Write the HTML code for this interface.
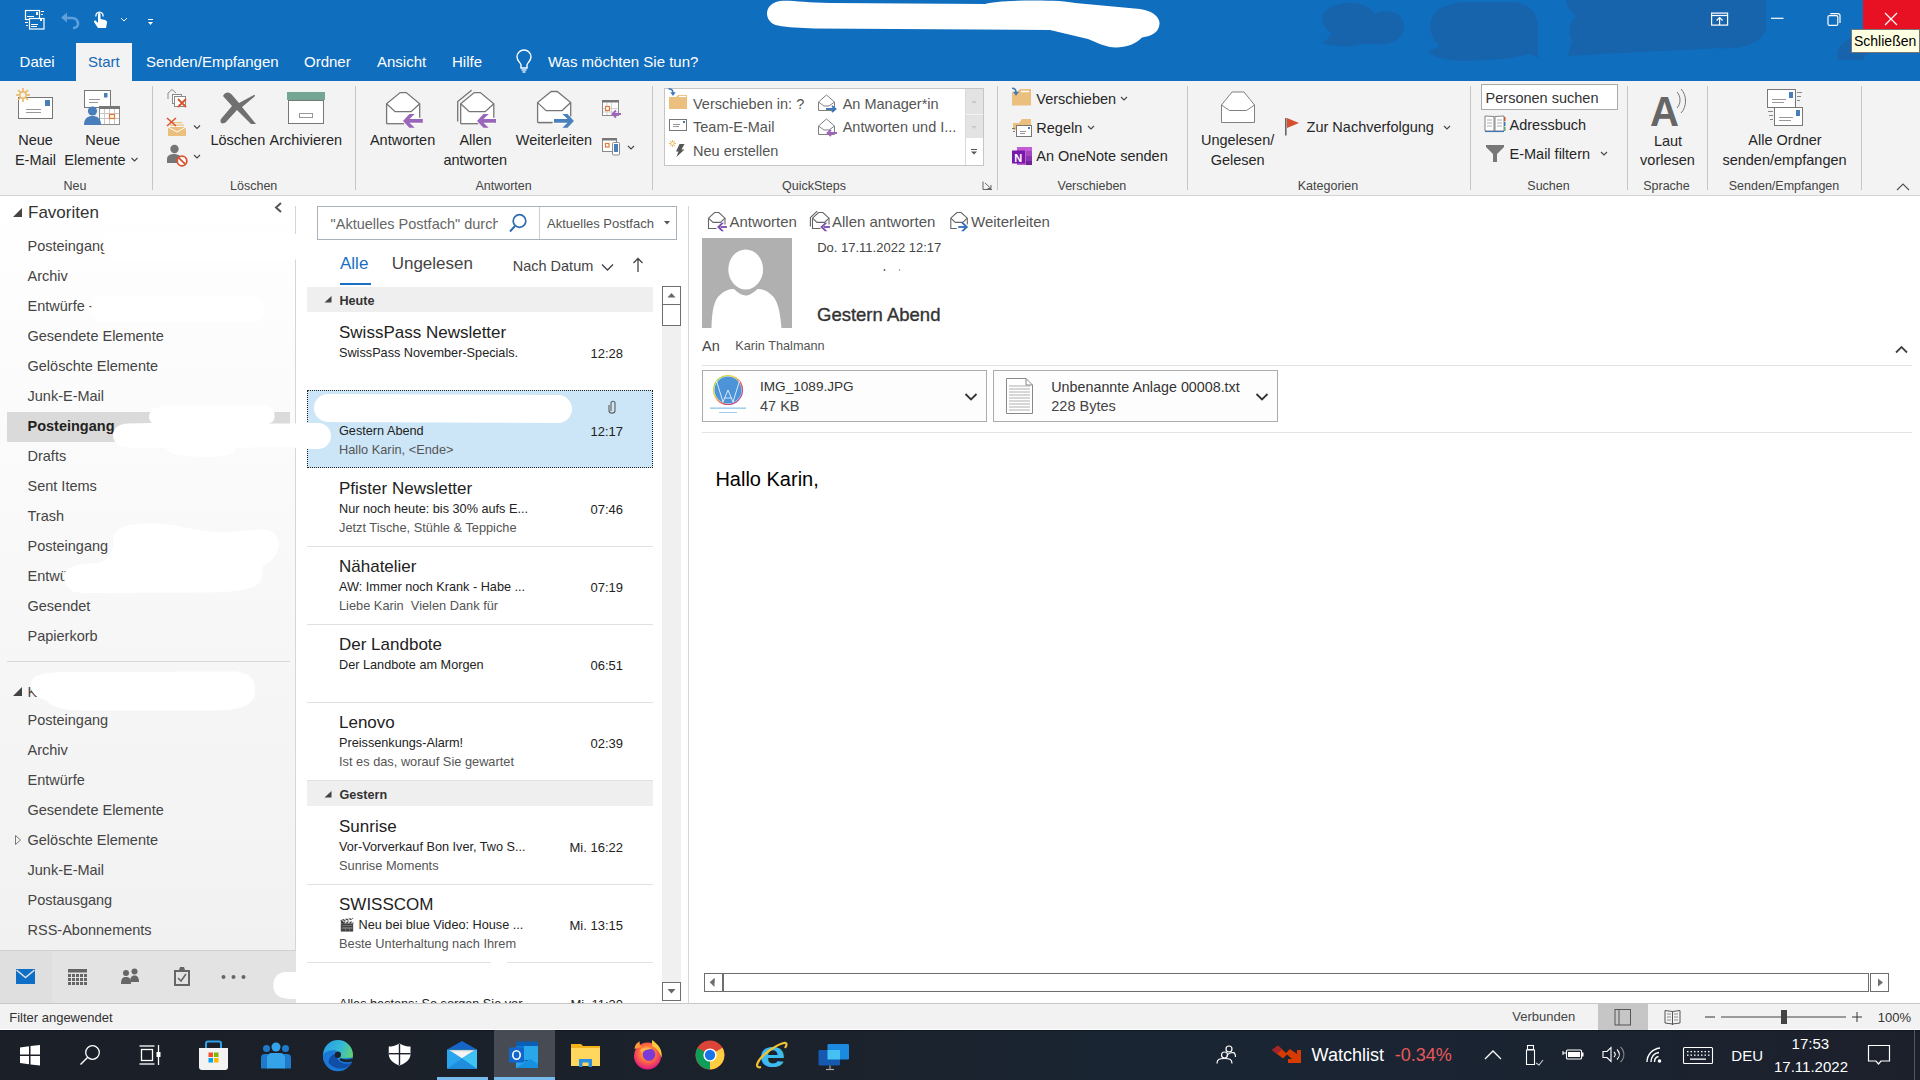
<!DOCTYPE html>
<html><head><meta charset="utf-8">
<style>
*{margin:0;padding:0;box-sizing:border-box}
html,body{width:1920px;height:1080px;overflow:hidden;background:#fff}
body{font-family:"Liberation Sans",sans-serif;position:relative}
.a{position:absolute}
.t{position:absolute;white-space:nowrap;line-height:1}
svg{position:absolute;overflow:visible}
</style></head><body>
<!-- 00_bg.py -->
<div class="a" style="left:0px;top:0px;width:1920px;height:81px;background:#106EBE;"></div>
<div class="a" style="left:0px;top:81px;width:1920px;height:114px;background:#F3F3F3;"></div>
<div class="a" style="left:0px;top:195px;width:1920px;height:1px;background:#D4D4D4;"></div>
<div class="a" style="left:0px;top:196px;width:295px;height:754px;background:linear-gradient(#FFFFFF,#F1F1F1);"></div>
<div class="a" style="left:295px;top:206px;width:1px;height:744px;background:#D6D6D6;"></div>
<div class="a" style="left:0px;top:950px;width:296px;height:53px;background:#E3E3E3;border-top:1px solid #D0D0D0"></div>
<div class="a" style="left:0px;top:951px;width:52px;height:52px;background:#DFDFDF;"></div>
<div class="a" style="left:688px;top:206px;width:1px;height:797px;background:#D6D6D6;"></div>
<div class="a" style="left:0px;top:1003px;width:1920px;height:27px;background:#F2F2F2;border-top:1px solid #C6C6C6"></div>
<div class="a" style="left:0px;top:1029px;width:1920px;height:1px;background:#FFFFFF;"></div>
<div class="a" style="left:0px;top:1030px;width:1920px;height:50px;background:linear-gradient(to right,#1B1F27 0%,#1B222C 45%,#1A2533 58%,#1A2432 75%,#1C202B 100%);"></div>
<div class="a" style="left:0px;top:1030px;width:1920px;height:1px;background:#0F1823;"></div>
<!-- 10_title.py -->
<!-- clouds -->
<svg style="left:0;top:0" width="1920" height="81">
 <g fill="#1763AC">
  <path d="M1322 44 L1332 34 C1318 24 1318 8 1340 4 C1356 1 1370 6 1374 14 C1386 8 1402 12 1404 24 C1406 38 1392 46 1376 44 L1360 44 C1350 48 1335 46 1322 44 Z"/>
  <path d="M1428 52 L1440 46 C1432 40 1428 28 1432 18 C1436 8 1450 2 1470 2 L1510 2 C1530 2 1538 14 1538 28 L1538 58 L1530 54 C1510 60 1470 62 1450 60 C1440 58 1432 56 1428 52 Z"/>
  <path d="M1566 0 L1766 0 L1766 30 C1760 44 1740 50 1720 48 L1600 54 L1568 56 L1572 40 C1566 30 1572 20 1576 16 C1568 10 1566 4 1566 0 Z"/>
  <path d="M1838 60 C1834 48 1846 36 1862 36 L1880 40 L1862 60 Z"/>
 </g>
 <!-- censor scribble -->
 <path d="M780 1 C792 0 805 3 830 3 L985 4 C995 0 1060 -1 1075 3 L1140 9 C1154 11 1160 18 1159.5 24 C1159 32 1152 36 1142 37.5 C1136 44 1126 47.5 1116 47.5 C1106 47.5 1098 43 1088 39 L1050 30 L815 28.5 C800 28 788 27.5 778 25.5 C764 23 762 4 780 1 Z" fill="#fff"/>
</svg>
<!-- QAT icons -->
<svg style="left:0;top:0" width="170" height="42">
 <g fill="none" stroke="#fff" stroke-width="1.2">
  <rect x="25.5" y="10.5" width="14" height="9"/>
  <rect x="29.5" y="18.5" width="14.5" height="10.5" fill="#106EBE"/>
 </g>
 <g fill="#fff">
  <rect x="36" y="12" width="2" height="3"/><rect x="40" y="18" width="2" height="3"/>
  <rect x="27" y="16" width="7" height="1"/><rect x="31" y="24" width="7" height="1"/><rect x="31" y="26" width="6" height="1"/>
  <rect x="41" y="11" width="3" height="1"/><rect x="41" y="14" width="2" height="1"/>
  <rect x="25" y="22" width="3" height="1"/><rect x="26" y="25" width="2" height="1"/>
 </g>
 <path d="M66 18 L72 18 C77 18 78 22 78 24 C78 26 76 28 73 28" stroke="#5EA0DA" stroke-width="2.6" fill="none"/>
 <path d="M61 17.5 L67 12.5 L67 22.5 Z" fill="#5EA0DA"/>
 <path d="M98 28 L94 22 C93.5 21 95 20 96 21 L98 23 L98 14 C98 12.5 100.5 12.5 100.5 14 L100.5 19 L105 20 C106.5 20.5 107 21 107 22.5 L106 28 Z" fill="#fff"/>
 <path d="M96 16.5 A3.6 3.6 0 1 1 103 16.5" stroke="#fff" stroke-width="1.3" fill="none"/>
 <path d="M121 18 L124 21 L127 18" stroke="#fff" stroke-width="1" fill="none"/>
 <rect x="148" y="19" width="5" height="1" fill="#fff"/>
 <path d="M148 22 L153 22 L150.5 25 Z" fill="#fff"/>
</svg>
<!-- window controls -->
<div class="a" style="left:1863px;top:0;width:57px;height:30px;background:#E81123"></div>
<svg style="left:1700px;top:0" width="220" height="30">
 <g stroke="#fff" stroke-width="1.2" fill="none">
  <rect x="11.6" y="13.1" width="16" height="12"/>
  <line x1="11.6" y1="15.5" x2="27.6" y2="15.5"/>
  <line x1="19.6" y1="17.5" x2="19.6" y2="25"/>
  <path d="M16.6 20.5 L19.6 17.5 L22.6 20.5"/>
  <line x1="71" y1="18.3" x2="83.5" y2="18.3"/>
  <rect x="128" y="15.6" width="9.8" height="9.8" rx="1.5"/>
  <path d="M130.3 13.6 L137.8 13.6 Q140 13.6 140 15.8 L140 23"/>
  <path d="M185 13 L197 25 M197 13 L185 25"/>
 </g>
</svg>
<div class="a" style="left:1851px;top:29px;width:69px;height:24px;background:#FFFFE1;border:1px solid #767676"></div>
<div class="t" style="left:1854px;top:34px;font-size:14px;color:#000">Schließen</div>
<!-- TABS -->
<div class="a" style="left:76px;top:43px;width:56px;height:38px;background:#F3F3F3"></div>
<div class="t" style="left:19.6px;top:54px;font-size:15px;color:#fff">Datei</div>
<div class="t" style="left:88px;top:54px;font-size:15px;color:#1568B8">Start</div>
<div class="t" style="left:146px;top:54px;font-size:15px;color:#fff">Senden/Empfangen</div>
<div class="t" style="left:304px;top:54px;font-size:15px;color:#fff">Ordner</div>
<div class="t" style="left:377px;top:54px;font-size:15px;color:#fff">Ansicht</div>
<div class="t" style="left:452px;top:54px;font-size:15px;color:#fff">Hilfe</div>
<svg style="left:510px;top:48px" width="30" height="28">
 <path d="M11 20 L11 17 C11 15 7 13 7 9 A7 7 0 0 1 21 9 C21 13 17 15 17 17 L17 20 Z" stroke="#fff" stroke-width="1.4" fill="none"/>
 <line x1="11.5" y1="22" x2="16.5" y2="22" stroke="#fff" stroke-width="1.3"/>
 <line x1="12.5" y1="24" x2="15.5" y2="24" stroke="#fff" stroke-width="1.3"/>
</svg>
<div class="t" style="left:548px;top:54px;font-size:15px;color:#fff">Was möchten Sie tun?</div>
<!-- 20_ribbon.py -->
<div class="a" style="left:152px;top:86px;width:1px;height:104px;background:#C6C6C6;"></div>
<div class="a" style="left:355px;top:86px;width:1px;height:104px;background:#C6C6C6;"></div>
<div class="a" style="left:652px;top:86px;width:1px;height:104px;background:#C6C6C6;"></div>
<div class="a" style="left:997px;top:86px;width:1px;height:104px;background:#C6C6C6;"></div>
<div class="a" style="left:1187px;top:86px;width:1px;height:104px;background:#C6C6C6;"></div>
<div class="a" style="left:1470px;top:86px;width:1px;height:104px;background:#C6C6C6;"></div>
<div class="a" style="left:1627px;top:86px;width:1px;height:104px;background:#C6C6C6;"></div>
<div class="a" style="left:1707px;top:86px;width:1px;height:104px;background:#C6C6C6;"></div>
<div class="a" style="left:1861px;top:86px;width:1px;height:104px;background:#C6C6C6;"></div>
<div class="t" style="left:-264.5px;width:600px;text-align:center;top:133.43px;font-size:14.5px;color:#262626;font-weight:normal;">Neue</div>
<div class="t" style="left:-264.5px;width:600px;text-align:center;top:153.33px;font-size:14.5px;color:#262626;font-weight:normal;">E-Mail</div>
<div class="t" style="left:-197.3px;width:600px;text-align:center;top:133.43px;font-size:14.5px;color:#262626;font-weight:normal;">Neue</div>
<div class="t" style="left:-205.0px;width:600px;text-align:center;top:153.33px;font-size:14.5px;color:#262626;font-weight:normal;">Elemente</div>
<div class="t" style="left:-225.0px;width:600px;text-align:center;top:179.82px;font-size:12.5px;color:#444;font-weight:normal;">Neu</div>
<div class="t" style="left:-62.2px;width:600px;text-align:center;top:133.43px;font-size:14.5px;color:#262626;font-weight:normal;">Löschen</div>
<div class="t" style="left:5.8px;width:600px;text-align:center;top:133.43px;font-size:14.5px;color:#262626;font-weight:normal;">Archivieren</div>
<div class="t" style="left:-46.3px;width:600px;text-align:center;top:179.82px;font-size:12.5px;color:#444;font-weight:normal;">Löschen</div>
<div class="t" style="left:102.6px;width:600px;text-align:center;top:133.43px;font-size:14.5px;color:#262626;font-weight:normal;">Antworten</div>
<div class="t" style="left:175.5px;width:600px;text-align:center;top:133.43px;font-size:14.5px;color:#262626;font-weight:normal;">Allen</div>
<div class="t" style="left:175.3px;width:600px;text-align:center;top:153.33px;font-size:14.5px;color:#262626;font-weight:normal;">antworten</div>
<div class="t" style="left:253.9px;width:600px;text-align:center;top:133.43px;font-size:14.5px;color:#262626;font-weight:normal;">Weiterleiten</div>
<div class="t" style="left:203.6px;width:600px;text-align:center;top:179.82px;font-size:12.5px;color:#444;font-weight:normal;">Antworten</div>
<div class="a" style="left:664px;top:88px;width:320px;height:78px;background:#FFFFFF;border:1px solid #C6C6C6"></div>
<div class="a" style="left:965px;top:89px;width:18px;height:25px;background:#E3E3E3;"></div>
<div class="a" style="left:965px;top:114px;width:18px;height:24px;background:#E3E3E3;border-top:1px solid #F3F3F3"></div>
<div class="a" style="left:965px;top:89px;width:1px;height:76px;background:#D9D9D9;"></div>
<div class="t" style="left:693.0px;top:96.73px;font-size:14.5px;color:#555;font-weight:normal;">Verschieben in: ?</div>
<div class="t" style="left:693.0px;top:120.43px;font-size:14.5px;color:#555;font-weight:normal;">Team-E-Mail</div>
<div class="t" style="left:693.0px;top:144.43px;font-size:14.5px;color:#555;font-weight:normal;">Neu erstellen</div>
<div class="t" style="left:842.7px;top:96.73px;font-size:14.5px;color:#555;font-weight:normal;">An Manager*in</div>
<div class="t" style="left:842.7px;top:120.43px;font-size:14.5px;color:#555;font-weight:normal;">Antworten und I...</div>
<div class="t" style="left:514.0px;width:600px;text-align:center;top:179.82px;font-size:12.5px;color:#444;font-weight:normal;">QuickSteps</div>
<div class="t" style="left:1036.3px;top:91.93px;font-size:14.5px;color:#262626;font-weight:normal;">Verschieben</div>
<div class="t" style="left:1036.3px;top:120.83px;font-size:14.5px;color:#262626;font-weight:normal;">Regeln</div>
<div class="t" style="left:1036.3px;top:149.43px;font-size:14.5px;color:#262626;font-weight:normal;">An OneNote senden</div>
<div class="t" style="left:791.9px;width:600px;text-align:center;top:179.82px;font-size:12.5px;color:#444;font-weight:normal;">Verschieben</div>
<div class="t" style="left:937.6px;width:600px;text-align:center;top:133.43px;font-size:14.5px;color:#262626;font-weight:normal;">Ungelesen/</div>
<div class="t" style="left:937.7px;width:600px;text-align:center;top:153.13px;font-size:14.5px;color:#262626;font-weight:normal;">Gelesen</div>
<div class="t" style="left:1306.6px;top:120.33px;font-size:14.5px;color:#262626;font-weight:normal;">Zur Nachverfolgung</div>
<div class="t" style="left:1028.0px;width:600px;text-align:center;top:179.82px;font-size:12.5px;color:#444;font-weight:normal;">Kategorien</div>
<div class="a" style="left:1481px;top:84px;width:137px;height:26px;background:#FFFFFF;border:1px solid #ABABAB"></div>
<div class="t" style="left:1485.6px;top:90.53px;font-size:14.5px;color:#333;font-weight:normal;">Personen suchen</div>
<div class="t" style="left:1509.5px;top:117.63px;font-size:14.5px;color:#262626;font-weight:normal;">Adressbuch</div>
<div class="t" style="left:1509.5px;top:146.53px;font-size:14.5px;color:#262626;font-weight:normal;">E-Mail filtern</div>
<div class="t" style="left:1248.5px;width:600px;text-align:center;top:179.82px;font-size:12.5px;color:#444;font-weight:normal;">Suchen</div>
<div class="t" style="left:1368.0px;width:600px;text-align:center;top:133.53px;font-size:14.5px;color:#262626;font-weight:normal;">Laut</div>
<div class="t" style="left:1367.5px;width:600px;text-align:center;top:153.03px;font-size:14.5px;color:#262626;font-weight:normal;">vorlesen</div>
<div class="t" style="left:1366.5px;width:600px;text-align:center;top:179.82px;font-size:12.5px;color:#444;font-weight:normal;">Sprache</div>
<div class="t" style="left:1485.0px;width:600px;text-align:center;top:133.33px;font-size:14.5px;color:#262626;font-weight:normal;">Alle Ordner</div>
<div class="t" style="left:1484.5px;width:600px;text-align:center;top:153.33px;font-size:14.5px;color:#262626;font-weight:normal;">senden/empfangen</div>
<div class="t" style="left:1484.0px;width:600px;text-align:center;top:179.82px;font-size:12.5px;color:#444;font-weight:normal;">Senden/Empfangen</div>
<svg style="left:0;top:0" width="1920" height="200">
<defs>
 <g id="chev"><path d="M-3 -1.5 L0 1.5 L3 -1.5" stroke="#444" stroke-width="1.1" fill="none"/></g>
</defs>
<!-- New email -->
<rect x="18.5" y="97.5" width="34" height="21" fill="#fff" stroke="#767676"/>
<rect x="45" y="100" width="5" height="6" fill="#4A7EBB"/>
<rect x="26" y="109" width="15" height="1" fill="#999"/><rect x="26" y="112" width="15" height="1" fill="#999"/>
<g stroke="#EAB864" stroke-width="1.6">
 <line x1="23" y1="88" x2="23" y2="102"/><line x1="16" y1="95" x2="30" y2="95"/>
 <line x1="18" y1="90" x2="28" y2="100"/><line x1="28" y1="90" x2="18" y2="100"/>
</g>
<circle cx="23" cy="95" r="3.2" fill="#F3F3F3" stroke="#EAB864" stroke-width="1.4"/>
<!-- New items -->
<rect x="84.5" y="90.5" width="26" height="17" fill="#fff" stroke="#767676"/>
<rect x="104" y="93" width="3.5" height="4.5" fill="#4A7EBB"/>
<rect x="89" y="99" width="11" height="1" fill="#999"/><rect x="89" y="102" width="9" height="1" fill="#999"/>
<rect x="99.5" y="106.5" width="20" height="18" fill="#fff" stroke="#8A8A8A"/>
<rect x="99" y="106" width="21" height="3" fill="#777"/>
<g stroke="#C8C8C8" stroke-width="1"><line x1="104.5" y1="109" x2="104.5" y2="124"/><line x1="109.5" y1="109" x2="109.5" y2="124"/><line x1="114.5" y1="109" x2="114.5" y2="124"/><line x1="100" y1="113.5" x2="119" y2="113.5"/><line x1="100" y1="118.5" x2="119" y2="118.5"/></g>
<rect x="109.5" y="114.5" width="5" height="4" fill="none" stroke="#E07B39" stroke-width="1.3"/>
<circle cx="92.5" cy="111" r="4.6" fill="#4A7EBB"/>
<path d="M84 125 C84 118 88 116 92.5 116 C97 116 101 118 101 125 Z" fill="#4A7EBB"/>
<use href="#chev" x="134.5" y="159.5"/>
<!-- Ignore -->
<path d="M168 99 L168 93 L172 89.5 L176 93" stroke="#8A8A8A" fill="none"/>
<rect x="172.5" y="94.5" width="9" height="9" fill="#fff" stroke="#8A8A8A"/>
<rect x="174.5" y="96.5" width="11" height="10" fill="#fff" stroke="#8A8A8A"/>
<path d="M178 99 L186 107 M186 99 L178 107" stroke="#D9532F" stroke-width="1.8"/>
<!-- Clean up -->
<rect x="168" y="127" width="18" height="9" fill="#EBC07E"/>
<path d="M168 127 L177 132 L186 127" stroke="#fff" stroke-width="1" fill="none"/>
<rect x="170" y="122" width="12" height="1.2" fill="#EBC07E"/><rect x="170" y="124.5" width="14" height="1.2" fill="#EBC07E"/>
<path d="M167 118 L176 126 M176 118 L167 126" stroke="#D9532F" stroke-width="1.5"/>
<use href="#chev" x="197" y="127"/>
<!-- Junk -->
<circle cx="174.5" cy="149" r="4.2" fill="#767676"/>
<path d="M167 163 L167 159 C167 155 171 154 174.5 154 C177 154 179 155 180 156 L178 163 Z" fill="#767676"/>
<circle cx="182" cy="161" r="4.8" fill="#fff" stroke="#D9532F" stroke-width="1.8"/>
<line x1="178.8" y1="157.8" x2="185.2" y2="164.2" stroke="#D9532F" stroke-width="1.8"/>
<use href="#chev" x="197" y="156.5"/>
<!-- Big X -->
<path d="M223 96 C226 91 230 92 233 96 L239 103 L252 96 C255 94 256 95 254 97 L242 107 L256 124 L251 124 L237 110 L226 122 C223 125 219 123 221 119 L232 106 Z" fill="#707070"/>
<!-- Archive -->
<rect x="287" y="92" width="38" height="8" fill="#75A693"/>
<rect x="288.5" y="100.5" width="35" height="23" fill="#fff" stroke="#767676"/>
<rect x="299.5" y="113.5" width="13" height="4" fill="none" stroke="#999"/>
<!-- Reply big -->
<defs>
<g id="benv">
 <path d="M0 11.1 L13.6 0 L19.6 0 L33.1 11.1 L33.1 31.1 L0 31.1 Z" fill="#fff"/>
 <g fill="none" stroke="#767676" stroke-width="1.3">
  <path d="M0 31.1 L0 11.1 L13.6 0 L19.6 0 L33.1 11.1 L33.1 25.1"/>
  <path d="M0 11.1 L8.5 19.1 L24.5 19.1 L33.1 11.1"/>
  <path d="M0 31.1 L17.5 31.1"/>
 </g>
</g>
</defs>
<use href="#benv" x="386.6" y="92.6"/>
<path d="M403 121 L409.4 114.1 L414.7 114.1 L409.5 119 L422.8 119 L422.8 122.8 L409.5 122.8 L414.7 127.8 L409.4 127.8 Z" fill="#9A66BA"/>
<path d="M457.7 121.6 L457.7 101.5 L471.6 90.3" fill="none" stroke="#767676" stroke-width="1.3"/>
<use href="#benv" x="460.7" y="92.6"/>
<path d="M477 121 L483.4 114.1 L488.7 114.1 L483.5 119 L496 119 L496 122.8 L483.5 122.8 L488.7 127.8 L483.4 127.8 Z" fill="#9A66BA"/>
<use href="#benv" x="537.6" y="91.5"/>
<rect x="552" y="116" width="12" height="8" fill="#fff"/>
<path d="M538.2 122.5 L552.8 122.5" stroke="#767676" stroke-width="1.3"/>
<path d="M573.9 121 L567.5 114 L562.4 114 L567.6 119 L554 119 L554 122.8 L567.6 122.8 L562.4 127.8 L567.5 127.8 Z" fill="#4A80BC"/>
<!-- meeting reply small -->
<rect x="602.5" y="100.5" width="16" height="15" fill="#fff" stroke="#8A8A8A"/>
<rect x="602" y="100" width="17" height="2.5" fill="#777"/>
<g stroke="#C8C8C8" stroke-width="0.8"><line x1="607" y1="103" x2="607" y2="115"/><line x1="611.5" y1="103" x2="611.5" y2="115"/><line x1="603" y1="108.5" x2="618" y2="108.5"/><line x1="603" y1="112" x2="618" y2="112"/></g>
<rect x="605.5" y="106.5" width="4" height="4" fill="#fff" stroke="#E07B39" stroke-width="1.2"/>
<path d="M621 114 L613 114 M616 110.5 L612.5 114 L616 117.5" stroke="#A064BE" stroke-width="1.8" fill="none"/>
<rect x="602.5" y="138.5" width="14" height="13" fill="#fff" stroke="#8A8A8A"/>
<rect x="602" y="138" width="15" height="2.5" fill="#777"/>
<rect x="605.5" y="143.5" width="3.5" height="3.5" fill="none" stroke="#E07B39" stroke-width="1.2"/>
<rect x="612.5" y="142.5" width="7" height="12.5" rx="1" fill="#fff" stroke="#8A8A8A"/>
<rect x="614" y="144" width="4" height="8" fill="#4A7EBB"/>
<use href="#chev" x="631" y="147.5"/>
<!-- Quicksteps icons -->
<path d="M669 97 L676 97 L678 95 L687 95 L687 109 L669 109 Z" fill="#EBC07E"/>
<path d="M679 96.5 L686 96.5" stroke="#fff" stroke-width="1.2"/>
<path d="M668.5 88.8 C671.5 88.8 673 90 673 93" stroke="#3F77B8" stroke-width="1.4" fill="none"/>
<path d="M670.3 92.3 L675.7 92.3 L673 96 Z" fill="#3F77B8"/>
<rect x="669.5" y="119.5" width="17" height="11" fill="#fff" stroke="#777"/>
<rect x="683" y="121" width="2" height="2" fill="#3F77B8"/>
<rect x="673" y="124" width="7" height="1" fill="#999"/><rect x="673" y="126" width="6" height="1" fill="#999"/>
<g stroke="#EBB864" stroke-width="1"><line x1="672.5" y1="140" x2="672.5" y2="147"/><line x1="669" y1="143.5" x2="676" y2="143.5"/><line x1="670" y1="141" x2="675" y2="146"/><line x1="675" y1="141" x2="670" y2="146"/></g><circle cx="672.5" cy="143.5" r="1.6" fill="#fff" stroke="#EBB864" stroke-width="0.8"/>
<path d="M679.5 144 L684.5 144 L681.5 149.5 L684.5 149.5 L676.5 157 L678.5 151.5 L676 151.5 Z" fill="#555"/>
<path d="M818.5 102 L826.5 95 L834.5 102 L834.5 110.5 L818.5 110.5 Z" fill="#fff" stroke="#808080"/>
<path d="M818.5 102 L824 106 L829 106 L834.5 102" fill="none" stroke="#808080"/>
<path d="M826 109 L835 109 M832 106 L835.5 109 L832 112" stroke="#3F77B8" stroke-width="1.8" fill="none"/>
<path d="M818.5 126 L826.5 119 L834.5 126 L834.5 134.5 L818.5 134.5 Z" fill="#fff" stroke="#808080"/>
<path d="M818.5 126 L824 130 L829 130 L834.5 126" fill="none" stroke="#808080"/>
<path d="M837 133 L828 133 M831 130 L827.5 133 L831 136" stroke="#A064BE" stroke-width="1.8" fill="none"/>
<path d="M971 103 L974 100 L977 103 Z" fill="#C9C9C9"/>
<path d="M971 126 L974 129 L977 126 Z" fill="#C9C9C9"/>
<rect x="971" y="149" width="6" height="1" fill="#555"/>
<path d="M971 151.5 L977 151.5 L974 154.5 Z" fill="#555"/>
<path d="M983 181.5 L983 189.5 L992 189.5 M985 183 L991 188.5 M991 185 L991 188.5 L987.5 188.5" stroke="#666" fill="none"/>
<!-- Verschieben icons -->
<path d="M1012 92 L1017 92 L1020 89 L1031 89 L1031 105.5 L1012 105.5 Z" fill="#EBC07E"/>
<path d="M1021 91.5 L1029 91.5" stroke="#fff" stroke-width="1.5"/>
<path d="M1012 88.3 C1015 88.3 1016 89.5 1016 92.5" stroke="#3F77B8" stroke-width="1.6" fill="none"/>
<path d="M1013 91.8 L1019 91.8 L1016 95.8 Z" fill="#3F77B8"/>
<use href="#chev" x="1124" y="98.5"/>
<path d="M1013 123 L1019 123 L1022 119 L1031 119 L1031 130 L1013 130 Z" fill="#EBC07E"/>
<rect x="1016.5" y="125.5" width="15" height="11" fill="#fff" stroke="#777"/>
<rect x="1028" y="127" width="2" height="2" fill="#3F77B8"/>
<rect x="1020" y="131" width="6" height="1" fill="#999"/><rect x="1020" y="133" width="5" height="1" fill="#999"/>
<rect x="1012" y="128" width="3" height="1" fill="#777"/><rect x="1013" y="131" width="2" height="1" fill="#777"/>
<use href="#chev" x="1091" y="127.5"/>
<rect x="1017" y="147" width="15" height="18" fill="#C15BD6"/>
<rect x="1026" y="151" width="6" height="5" fill="#A447C0"/><rect x="1026" y="156" width="6" height="5" fill="#8A36AE"/><rect x="1026" y="161" width="6" height="4" fill="#6D2596"/>
<rect x="1012" y="150.5" width="13" height="13" fill="#7719AA"/>
<text x="1014.2" y="161.5" font-family="Liberation Sans" font-weight="bold" font-size="11" fill="#fff">N</text>
<!-- Kategorien -->
<path d="M1221.5 105 L1232 92 L1244 92 L1254.5 105 L1254.5 122.5 L1221.5 122.5 Z" fill="#fff" stroke="#808080"/>
<path d="M1221.5 105 L1229.5 110.5 L1246.5 110.5 L1254.5 105" fill="none" stroke="#808080"/>
<rect x="1285" y="118" width="1.6" height="17.5" fill="#666"/>
<path d="M1287 118 L1299 123 L1287 128 Z" fill="#D6502E"/>
<use href="#chev" x="1447" y="127.5"/>
<!-- Suchen -->
<path d="M1485 116 L1494 116.5 L1494 131 L1485 131 Z M1495 116.5 L1504 116 L1504 131 L1495 131 Z" fill="#fff" stroke="#777" stroke-width="0.9"/>
<line x1="1485" y1="131.5" x2="1504" y2="131.5" stroke="#3F77B8" stroke-width="1.2"/>
<g stroke="#999" stroke-width="0.8"><line x1="1487" y1="120" x2="1492" y2="120"/><line x1="1487" y1="123" x2="1492" y2="123"/><line x1="1487" y1="126" x2="1492" y2="126"/><line x1="1497" y1="120" x2="1502" y2="120"/><line x1="1497" y1="123" x2="1502" y2="123"/><line x1="1497" y1="126" x2="1502" y2="126"/></g>
<rect x="1504" y="117" width="1.5" height="4" fill="#D9532F"/><rect x="1504" y="122" width="1.5" height="4" fill="#3F77B8"/><rect x="1504" y="127" width="1.5" height="4" fill="#5BAA7A"/>
<path d="M1486 145 L1504 145 L1504 147 L1497 154 L1497 162 L1493 162 L1493 154 L1486 147 Z" fill="#777"/>
<use href="#chev" x="1604" y="153.5"/>
<!-- Laut vorlesen -->
<text x="1650" y="125.5" font-family="Liberation Sans" font-weight="bold" font-size="43" fill="#666" textLength="29" lengthAdjust="spacingAndGlyphs">A</text>
<path d="M1677 92 C1681 96 1681 104 1677 108" stroke="#777" stroke-width="1" fill="none"/>
<path d="M1681 89 C1687 95 1687 107 1681 113" stroke="#777" stroke-width="1" fill="none"/>
<!-- send/receive all -->
<rect x="1767.5" y="89.5" width="28" height="18" fill="#fff" stroke="#777"/>
<rect x="1789" y="92" width="4" height="6" fill="#4A7EBB"/>
<rect x="1772" y="99" width="14" height="1" fill="#999"/><rect x="1772" y="102" width="12" height="1" fill="#999"/>
<rect x="1797" y="92" width="5" height="1" fill="#888"/><rect x="1797" y="96" width="4" height="1" fill="#888"/><rect x="1797" y="100" width="3" height="1" fill="#888"/>
<rect x="1774.5" y="107.5" width="28" height="18" fill="#fff" stroke="#777"/>
<rect x="1796" y="110" width="4" height="6" fill="#4A7EBB"/>
<rect x="1779" y="117" width="14" height="1" fill="#999"/><rect x="1779" y="120" width="12" height="1" fill="#999"/>
<rect x="1768" y="111" width="5" height="1" fill="#888"/><rect x="1769" y="115" width="4" height="1" fill="#888"/><rect x="1770" y="119" width="3" height="1" fill="#888"/>
<path d="M1897 190 L1903 184 L1909 190" stroke="#555" stroke-width="1.2" fill="none"/>
</svg>
<!-- 30_nav.py -->
<div class="a" style="left:7px;top:412px;width:283px;height:30px;background:#DADADA;"></div>
<div class="t" style="left:28.0px;top:203.71px;font-size:17px;color:#333;font-weight:normal;">Favoriten</div>
<div class="t" style="left:27.5px;top:238.73px;font-size:14.5px;color:#444;font-weight:normal;">Posteingang</div>
<div class="t" style="left:27.5px;top:268.73px;font-size:14.5px;color:#444;font-weight:normal;">Archiv</div>
<div class="t" style="left:27.5px;top:298.73px;font-size:14.5px;color:#444;font-weight:normal;">Entwürfe -</div>
<div class="t" style="left:27.5px;top:328.73px;font-size:14.5px;color:#444;font-weight:normal;">Gesendete Elemente</div>
<div class="t" style="left:27.5px;top:358.73px;font-size:14.5px;color:#444;font-weight:normal;">Gelöschte Elemente</div>
<div class="t" style="left:27.5px;top:388.73px;font-size:14.5px;color:#444;font-weight:normal;">Junk-E-Mail</div>
<div class="t" style="left:27.5px;top:418.73px;font-size:14.5px;color:#222;font-weight:bold;">Posteingang</div>
<div class="t" style="left:27.5px;top:448.73px;font-size:14.5px;color:#444;font-weight:normal;">Drafts</div>
<div class="t" style="left:27.5px;top:478.73px;font-size:14.5px;color:#444;font-weight:normal;">Sent Items</div>
<div class="t" style="left:27.5px;top:508.73px;font-size:14.5px;color:#444;font-weight:normal;">Trash</div>
<div class="t" style="left:27.5px;top:538.73px;font-size:14.5px;color:#444;font-weight:normal;">Posteingang -</div>
<div class="t" style="left:27.5px;top:568.73px;font-size:14.5px;color:#444;font-weight:normal;">Entwürfe</div>
<div class="t" style="left:27.5px;top:598.73px;font-size:14.5px;color:#444;font-weight:normal;">Gesendet</div>
<div class="t" style="left:27.5px;top:628.73px;font-size:14.5px;color:#444;font-weight:normal;">Papierkorb</div>
<div class="a" style="left:7px;top:661px;width:283px;height:1px;background:#D9D9D9;"></div>
<div class="t" style="left:27.5px;top:684.73px;font-size:14.5px;color:#444;font-weight:normal;">K</div>
<div class="t" style="left:27.5px;top:713.23px;font-size:14.5px;color:#444;font-weight:normal;">Posteingang</div>
<div class="t" style="left:27.5px;top:743.23px;font-size:14.5px;color:#444;font-weight:normal;">Archiv</div>
<div class="t" style="left:27.5px;top:773.23px;font-size:14.5px;color:#444;font-weight:normal;">Entwürfe</div>
<div class="t" style="left:27.5px;top:803.23px;font-size:14.5px;color:#444;font-weight:normal;">Gesendete Elemente</div>
<div class="t" style="left:27.5px;top:833.23px;font-size:14.5px;color:#444;font-weight:normal;">Gelöschte Elemente</div>
<div class="t" style="left:27.5px;top:863.23px;font-size:14.5px;color:#444;font-weight:normal;">Junk-E-Mail</div>
<div class="t" style="left:27.5px;top:893.23px;font-size:14.5px;color:#444;font-weight:normal;">Postausgang</div>
<div class="t" style="left:27.5px;top:923.23px;font-size:14.5px;color:#444;font-weight:normal;">RSS-Abonnements</div>
<svg style="left:0;top:0" width="300" height="1003">
<path d="M13 217 L22 208 L22 217 Z" fill="#444"/>
<path d="M13 696 L22 687 L22 696 Z" fill="#444"/>
<path d="M15.5 835.5 L20.5 840 L15.5 844.5 Z" fill="none" stroke="#777"/>
<path d="M275 203.5 L280.5 208 L275 212.5 M275 203.5" fill="none"/>
<path d="M281 203 L276 207.5 L281 212" stroke="#555" stroke-width="2" fill="none"/>
<!-- scribbles -->
<g fill="#fff">
 <rect x="103" y="232" width="200" height="29.5" rx="14.5"/>
 <rect x="91" y="295" width="173.5" height="28" rx="14"/>
 <path d="M149 417 C149 409 158 405 172 405 L262 405.5 C272 405.5 275 411 274.5 417 C274 421 272 423 268 423.5 L318 423.5 C328 423.5 331 429 331 435 C331 442 326 446.5 318 447 L236 447.5 C236 453 228 457 205 457 C180 457 168 454 166 448 L128 447.5 C118 447 113 441 113 435.5 C113 428 119 424 128 423.5 L152 423 C150 421 149 419 149 417 Z"/>
 <path d="M113 540 C113 527 128 523.5 150 523.5 C178 523.5 192 531 222 532.5 C248 532 266 525 275 534 C283 544 277 559 263 566 L262 576 C262 588 244 592.5 205 592.5 L82 593 C68 592.5 62 583 65 573 C68 565 84 563.5 100 563 C109 559 113 552 113 540 Z"/>
 <path d="M32 680 C36 672 60 671.5 100 672 L232 671.5 C250 671.5 256 680 255 692 C254 705 242 710.5 212 710.5 L82 710.5 C62 710.5 50 706 46 700 C34 698 28 688 32 680 Z"/>
 <path d="M286 972 C274 972 272 984 274 990 C276 998 284 999 296 999 L296 972 Z"/>
</g>
<!-- bottom nav icons -->
<rect x="16" y="969" width="19" height="15" fill="#0F6FC6"/>
<path d="M16.5 970 L25.5 977.5 L34.5 970" stroke="#DFDFDF" stroke-width="1.6" fill="none"/>
<g fill="#666">
<rect x="68" y="969" width="19" height="3.5"/>
<rect x="68" y="974" width="3" height="3"/><rect x="72" y="974" width="3" height="3"/><rect x="76" y="974" width="3" height="3"/><rect x="80" y="974" width="3" height="3"/><rect x="84" y="974" width="3" height="3"/>
<rect x="68" y="978" width="3" height="3"/><rect x="72" y="978" width="3" height="3"/><rect x="76" y="978" width="3" height="3"/><rect x="80" y="978" width="3" height="3"/><rect x="84" y="978" width="3" height="3"/>
<rect x="68" y="982" width="3" height="3"/><rect x="72" y="982" width="3" height="3"/><rect x="76" y="982" width="3" height="3"/><rect x="80" y="982" width="3" height="3"/><rect x="84" y="982" width="3" height="3"/>
<circle cx="126" cy="973" r="3"/><circle cx="134.5" cy="971.5" r="3"/>
<path d="M121 984 C121 978 123 977 126 977 C129 977 131 978 131 984 Z"/>
<path d="M130 982 C130 977 132 975.5 134.5 975.5 C137 975.5 139 977 139 982 Z"/>
<path d="M174 970 L179 970 L180 967 L184 967 L185 970 L190 970 L190 986 L174 986 Z"/>
<rect x="176" y="972" width="12" height="12" fill="#E3E3E3"/>
<path d="M178 978 L181 981 L186 974" stroke="#666" stroke-width="1.6" fill="none"/>
<circle cx="223.5" cy="977" r="2"/><circle cx="233.5" cy="977" r="2"/><circle cx="243.5" cy="977" r="2"/>
</g>
</svg>
<div class="t" style="left:9.2px;top:1011.00px;font-size:13px;color:#333;font-weight:normal;">Filter angewendet</div>
<!-- 40_list.py -->
<div class="a" style="left:317px;top:206px;width:360px;height:34px;background:#FFFFFF;border:1px solid #A9B1BC"></div>
<div class="a" style="left:539px;top:207px;width:1px;height:32px;background:#C9CFD6;"></div>
<div class="a" style="left:318px;top:207px;width:180px;height:32px;overflow:hidden"><div class="t" style="left:12.6px;top:9.53px;font-size:14.5px;color:#666;font-weight:normal;">"Aktuelles Postfach" durchsuchen</div>
</div>
<div class="t" style="left:547.0px;top:216.60px;font-size:13px;color:#555;font-weight:normal;">Aktuelles Postfach</div>
<div class="t" style="left:340.0px;top:254.61px;font-size:17px;color:#1A6FC4;font-weight:normal;">Alle</div>
<div class="a" style="left:340px;top:283px;width:31px;height:2px;background:#1A6FC4;"></div>
<div class="t" style="left:391.7px;top:254.61px;font-size:17px;color:#444;font-weight:normal;">Ungelesen</div>
<div class="t" style="left:512.7px;top:259.23px;font-size:14.5px;color:#444;font-weight:normal;">Nach Datum</div>
<div class="a" style="left:307px;top:287px;width:346px;height:25px;background:#EFEFEF;"></div>
<div class="t" style="left:339.5px;top:295.23px;font-size:12.6px;color:#333;font-weight:bold;">Heute</div>
<div class="a" style="left:307px;top:780px;width:346px;height:26px;background:#EFEFEF;"></div>
<div class="a" style="left:307px;top:780px;width:346px;height:1px;background:#E1E1E1;"></div>
<div class="t" style="left:339.5px;top:789.23px;font-size:12.6px;color:#333;font-weight:bold;">Gestern</div>
<div class="a" style="left:307px;top:390px;width:346px;height:78px;background:#CDE6F7;border:1px dotted #222"></div>
<div class="t" style="left:339.0px;top:324.11px;font-size:17px;color:#222;font-weight:normal;">SwissPass Newsletter</div>
<div class="t" style="left:339.0px;top:346.95px;font-size:12.7px;color:#222;font-weight:normal;">SwissPass November-Specials.</div>
<div class="t" style="left:23.0px;width:600px;text-align:right;top:346.70px;font-size:13px;color:#222;font-weight:normal;">12:28</div>
<div class="t" style="left:339.0px;top:424.95px;font-size:12.7px;color:#222;font-weight:normal;">Gestern Abend</div>
<div class="t" style="left:23.0px;width:600px;text-align:right;top:424.70px;font-size:13px;color:#222;font-weight:normal;">12:17</div>
<div class="t" style="left:339.0px;top:444.16px;font-size:12.8px;color:#555;font-weight:normal;">Hallo Karin, &lt;Ende&gt;</div>
<div class="t" style="left:339.0px;top:480.11px;font-size:17px;color:#222;font-weight:normal;">Pfister Newsletter</div>
<div class="t" style="left:339.0px;top:502.95px;font-size:12.7px;color:#222;font-weight:normal;">Nur noch heute: bis 30% aufs E...</div>
<div class="t" style="left:23.0px;width:600px;text-align:right;top:502.70px;font-size:13px;color:#222;font-weight:normal;">07:46</div>
<div class="t" style="left:339.0px;top:522.16px;font-size:12.8px;color:#555;font-weight:normal;">Jetzt Tische, Stühle &amp; Teppiche</div>
<div class="t" style="left:339.0px;top:558.11px;font-size:17px;color:#222;font-weight:normal;">Nähatelier</div>
<div class="t" style="left:339.0px;top:580.95px;font-size:12.7px;color:#222;font-weight:normal;">AW: Immer noch Krank - Habe ...</div>
<div class="t" style="left:23.0px;width:600px;text-align:right;top:580.70px;font-size:13px;color:#222;font-weight:normal;">07:19</div>
<div class="t" style="left:339.0px;top:600.16px;font-size:12.8px;color:#555;font-weight:normal;">Liebe Karin&nbsp; Vielen Dank für</div>
<div class="t" style="left:339.0px;top:636.11px;font-size:17px;color:#222;font-weight:normal;">Der Landbote</div>
<div class="t" style="left:339.0px;top:658.95px;font-size:12.7px;color:#222;font-weight:normal;">Der Landbote am Morgen</div>
<div class="t" style="left:23.0px;width:600px;text-align:right;top:658.70px;font-size:13px;color:#222;font-weight:normal;">06:51</div>
<div class="t" style="left:339.0px;top:714.11px;font-size:17px;color:#222;font-weight:normal;">Lenovo</div>
<div class="t" style="left:339.0px;top:736.95px;font-size:12.7px;color:#222;font-weight:normal;">Preissenkungs-Alarm!</div>
<div class="t" style="left:23.0px;width:600px;text-align:right;top:736.70px;font-size:13px;color:#222;font-weight:normal;">02:39</div>
<div class="t" style="left:339.0px;top:756.16px;font-size:12.8px;color:#555;font-weight:normal;">Ist es das, worauf Sie gewartet</div>
<div class="t" style="left:339.0px;top:818.11px;font-size:17px;color:#222;font-weight:normal;">Sunrise</div>
<div class="t" style="left:339.0px;top:840.95px;font-size:12.7px;color:#222;font-weight:normal;">Vor-Vorverkauf Bon Iver, Two S...</div>
<div class="t" style="left:23.0px;width:600px;text-align:right;top:840.70px;font-size:13px;color:#222;font-weight:normal;">Mi. 16:22</div>
<div class="t" style="left:339.0px;top:860.16px;font-size:12.8px;color:#555;font-weight:normal;">Sunrise Moments</div>
<div class="t" style="left:339.0px;top:896.11px;font-size:17px;color:#222;font-weight:normal;">SWISSCOM</div>
<div class="t" style="left:339.0px;top:918.95px;font-size:12.7px;color:#222;font-weight:normal;">&#x1F3AC; Neu bei blue Video: House ...</div>
<div class="t" style="left:23.0px;width:600px;text-align:right;top:918.70px;font-size:13px;color:#222;font-weight:normal;">Mi. 13:15</div>
<div class="t" style="left:339.0px;top:938.16px;font-size:12.8px;color:#555;font-weight:normal;">Beste Unterhaltung nach Ihrem</div>
<div class="a" style="left:307px;top:546px;width:346px;height:1px;background:#E1E1E1;"></div>
<div class="a" style="left:307px;top:624px;width:346px;height:1px;background:#E1E1E1;"></div>
<div class="a" style="left:307px;top:702px;width:346px;height:1px;background:#E1E1E1;"></div>
<div class="a" style="left:307px;top:884px;width:346px;height:1px;background:#E1E1E1;"></div>
<div class="a" style="left:307px;top:962px;width:346px;height:1px;background:#E1E1E1;"></div>
<div class="a" style="left:491px;top:961px;width:16px;height:3px;background:#FFFFFF;"></div>
<div class="a" style="left:300px;top:962px;width:360px;height:41px;overflow:hidden"><div class="t" style="left:39.0px;top:35.75px;font-size:12.7px;color:#222;font-weight:normal;">Alles bestens: So sorgen Sie vor ...</div>
<div class="t" style="left:-277.0px;width:600px;text-align:right;top:35.50px;font-size:13px;color:#222;font-weight:normal;">Mi. 11:30</div>
</div>
<div class="a" style="left:662px;top:286px;width:19px;height:715px;background:#F0F0F0;"></div>
<div class="a" style="left:662px;top:286px;width:19px;height:19px;background:#FFFFFF;border:1px solid #6E6E6E"></div>
<div class="a" style="left:662px;top:304px;width:19px;height:22px;background:#FFFFFF;border:1px solid #6E6E6E"></div>
<div class="a" style="left:662px;top:982px;width:19px;height:19px;background:#FFFFFF;border:1px solid #6E6E6E"></div>
<svg style="left:0;top:0" width="700" height="1003">
<path d="M324.5 302.5 L331.5 296 L331.5 302.5 Z" fill="#444"/>
<path d="M324.5 797.5 L331.5 791 L331.5 797.5 Z" fill="#444"/>
<circle cx="519.5" cy="221" r="6.3" stroke="#2F6BB0" stroke-width="1.7" fill="none"/>
<line x1="515" y1="226" x2="510" y2="231.5" stroke="#2F6BB0" stroke-width="1.9"/>
<path d="M664 221 L670 221 L667 224.5 Z" fill="#555"/>
<path d="M602 264.5 L607.5 270 L613 264.5" stroke="#444" stroke-width="1.4" fill="none"/>
<path d="M638 258.5 L638 272 M633.5 263 L638 258.5 L642.5 263" stroke="#444" stroke-width="1.3" fill="none"/>
<path d="M667.5 297.5 L671.5 293 L675.5 297.5 Z" fill="#666"/>
<path d="M667.5 989 L671.5 993.5 L675.5 989 Z" fill="#666"/>
<path d="M611 411 L611 403.5 C611 400.5 615 400.5 615 403.5 L615 410.5 C615 414 609 414 609 410.5 L609 405" stroke="#666" stroke-width="1.2" fill="none"/>
<g stroke="#fff" stroke-linecap="round" fill="none">
 <path d="M328 408 L558 409" stroke-width="28"/>
 <path d="M300 436 L318 436" stroke-width="26"/>
</g>
</svg>
<!-- 50_read.py -->
<div class="t" style="left:729.4px;top:214.20px;font-size:15px;color:#555;font-weight:normal;">Antworten</div>
<div class="t" style="left:832.0px;top:214.20px;font-size:15px;color:#555;font-weight:normal;">Allen antworten</div>
<div class="t" style="left:971.0px;top:214.20px;font-size:15px;color:#555;font-weight:normal;">Weiterleiten</div>
<div class="a" style="left:702px;top:238px;width:90px;height:90px;background:#B0B0B0;"></div>
<div class="t" style="left:817.2px;top:241.00px;font-size:13px;color:#444;font-weight:normal;">Do. 17.11.2022 12:17</div>
<div class="t" style="left:817.0px;top:306.34px;font-size:18.5px;color:#333;font-weight:normal;-webkit-text-stroke:0.35px #333">Gestern Abend</div>
<div class="t" style="left:702.0px;top:338.73px;font-size:14.5px;color:#444;font-weight:normal;">An</div>
<div class="t" style="left:735.3px;top:340.25px;font-size:12.7px;color:#555;font-weight:normal;">Karin Thalmann</div>
<div class="a" style="left:702px;top:365px;width:1210px;height:1px;background:#E3E3E3;"></div>
<div class="a" style="left:702px;top:432px;width:1210px;height:1px;background:#E3E3E3;"></div>
<div class="a" style="left:702px;top:370px;width:285px;height:52px;background:#FDFDFD;border:1px solid #ABABAB"></div>
<div class="a" style="left:993px;top:370px;width:285px;height:52px;background:#FDFDFD;border:1px solid #ABABAB"></div>
<div class="t" style="left:760.0px;top:380.19px;font-size:13.6px;color:#333;font-weight:normal;">IMG_1089.JPG</div>
<div class="t" style="left:760.0px;top:399.33px;font-size:14.5px;color:#444;font-weight:normal;">47 KB</div>
<div class="t" style="left:1051.3px;top:379.60px;font-size:14.3px;color:#333;font-weight:normal;">Unbenannte Anlage 00008.txt</div>
<div class="t" style="left:1051.3px;top:399.33px;font-size:14.5px;color:#444;font-weight:normal;">228 Bytes</div>
<div class="t" style="left:715.4px;top:469.07px;font-size:20px;color:#000;font-weight:normal;">Hallo Karin,</div>
<div class="a" style="left:704px;top:973px;width:19px;height:19px;background:#FFFFFF;border:1px solid #6E6E6E"></div>
<div class="a" style="left:722px;top:973px;width:147px;height:19px;background:#FFFFFF;border:1px solid #6E6E6E;border-left-width:2px;width:1147px"></div>
<div class="a" style="left:1870px;top:973px;width:19px;height:19px;background:#FFFFFF;border:1px solid #6E6E6E"></div>
<svg style="left:0;top:0" width="1920" height="1003">
<defs>
<g id="smenvL" fill="none" stroke="#666" stroke-width="1.1">
 <path d="M0.5 6.2 L6.6 0.5 L10.8 0.5 L17 6.2 L17 12.5"/>
 <path d="M0.5 6.2 L0.5 16.5 L8.5 16.5"/>
 <path d="M0.5 6.2 L5 10.4 L12.5 10.4 L17 6.2"/>
</g>
<g id="smenvR" fill="none" stroke="#666" stroke-width="1.1">
 <path d="M0.5 6.2 L6.6 0.5 L10.8 0.5 L17 6.2 L17 12.5"/>
 <path d="M0.5 6.2 L0.5 16.5 L6.5 16.5"/>
 <path d="M0.5 6.2 L5 10.4 L12.5 10.4 L17 6.2"/>
</g>
</defs>
<use href="#smenvL" x="708" y="212"/>
<path d="M720.5 227 L727 227" stroke="#7B4BAE" stroke-width="1.8"/>
<path d="M717 227 L721.5 222.8 L724 222.8 L719.8 227 L724 231.2 L721.5 231.2 Z" fill="#7B4BAE"/>
<path d="M810.4 226.5 L810.4 217.5 L817.2 211.2" stroke="#666" stroke-width="1.1" fill="none"/>
<use href="#smenvL" x="812" y="212"/>
<path d="M824 227 L830 227" stroke="#7B4BAE" stroke-width="1.8"/>
<path d="M820.3 227 L824.8 222.8 L827.3 222.8 L823.1 227 L827.3 231.2 L824.8 231.2 Z" fill="#7B4BAE"/>
<use href="#smenvR" x="950.3" y="212"/>
<path d="M958.2 227 L965 227" stroke="#2F6DB5" stroke-width="1.8"/>
<path d="M968.1 227 L963.6 222.8 L961.1 222.8 L965.3 227 L961.1 231.2 L963.6 231.2 Z" fill="#2F6DB5"/>
<!-- avatar -->
<ellipse cx="745.7" cy="269.4" rx="17.4" ry="20" fill="#fff"/>
<path d="M711.5 328 C712 310 714 300 720 295 C725 290 730 289 734 289 C738 293 742 295.5 745.7 295.5 C749.5 295.5 753 293 757.5 289 C762 289 767 290 771.5 295 C777.5 300 780 310 781.5 328 Z" fill="#fff"/>
<circle cx="884.5" cy="270" r="0.9" fill="#555"/><circle cx="899.5" cy="270" r="0.7" fill="#777"/>
<path d="M1896 352.5 L1901.5 347 L1907 352.5" stroke="#444" stroke-width="1.8" fill="none"/>
<!-- logo -->
<rect x="706" y="375" width="46" height="42" fill="#fff"/>
<circle cx="728" cy="390" r="14.4" fill="none" stroke="url(#rb)" stroke-width="1.4"/>
<defs><linearGradient id="rb" x1="0" y1="0" x2="1" y2="1"><stop offset="0" stop-color="#7ED957"/><stop offset="0.35" stop-color="#F5D63D"/><stop offset="0.65" stop-color="#E2505C"/><stop offset="1" stop-color="#8E5BD6"/></linearGradient></defs>
<circle cx="728" cy="390" r="13.5" fill="#4C93D8"/>
<path d="M716.5 381 L723 402 L728 390 L733 402 L739.5 381 M724.5 398 L731.5 398" stroke="#fff" stroke-width="0.8" fill="none"/>
<rect x="710" y="407.5" width="36" height="1.3" fill="#8EC4EC"/>
<rect x="719" y="412" width="18" height="1" fill="#9CCBEE"/>
<path d="M965.5 394 L971 399.5 L976.5 394" stroke="#333" stroke-width="1.8" fill="none"/>
<path d="M1256.5 394 L1262 399.5 L1267.5 394" stroke="#333" stroke-width="1.8" fill="none"/>
<!-- doc icon -->
<path d="M1006.5 378.5 L1026 378.5 L1032.5 385 L1032.5 413.5 L1006.5 413.5 Z" fill="#fff" stroke="#888"/>
<path d="M1026 378.5 L1026 385 L1032.5 385" fill="none" stroke="#888"/>
<g stroke="#999" stroke-width="0.8">
<line x1="1009" y1="386" x2="1030" y2="386"/><line x1="1009" y1="389" x2="1030" y2="389"/><line x1="1009" y1="392" x2="1030" y2="392"/><line x1="1009" y1="395" x2="1030" y2="395"/><line x1="1009" y1="398" x2="1030" y2="398"/><line x1="1009" y1="401" x2="1030" y2="401"/><line x1="1009" y1="404" x2="1030" y2="404"/><line x1="1009" y1="407" x2="1030" y2="407"/><line x1="1009" y1="410" x2="1030" y2="410"/>
</g>
<path d="M714.5 982.5 L709.5 982.5 L714.5 978 Z" fill="#6E6E6E"/>
<path d="M710 982.5 L714.5 987 L714.5 978 Z" fill="#6E6E6E"/>
<path d="M1878 978.5 L1883 982.5 L1878 986.5 Z" fill="#6E6E6E"/>
</svg>
<!-- 60_status.py -->
<div class="t" style="left:1512.3px;top:1010.40px;font-size:13px;color:#444;font-weight:normal;">Verbunden</div>
<div class="a" style="left:1598px;top:1004px;width:50px;height:26px;background:#C6C6C6;"></div>
<div class="t" style="left:1877.8px;top:1010.50px;font-size:13px;color:#333;font-weight:normal;">100%</div>
<svg style="left:0;top:0" width="1920" height="1030">
<rect x="1615" y="1009.5" width="15.5" height="15.5" fill="none" stroke="#555" stroke-width="1"/>
<line x1="1619" y1="1010" x2="1619" y2="1025" stroke="#555"/>
<path d="M1665 1010.5 L1672.5 1011.5 L1680 1010.5 L1680 1023 L1672.5 1024 L1665 1023 Z" fill="none" stroke="#555"/>
<line x1="1672.5" y1="1011.5" x2="1672.5" y2="1025" stroke="#555"/>
<g stroke="#777" stroke-width="0.8"><line x1="1667" y1="1014" x2="1671" y2="1014"/><line x1="1667" y1="1017" x2="1671" y2="1017"/><line x1="1667" y1="1020" x2="1671" y2="1020"/><line x1="1674" y1="1014" x2="1678" y2="1014"/><line x1="1674" y1="1017" x2="1678" y2="1017"/><line x1="1674" y1="1020" x2="1678" y2="1020"/></g>
<line x1="1705" y1="1017" x2="1715" y2="1017" stroke="#444" stroke-width="1.1"/>
<line x1="1721" y1="1017" x2="1846" y2="1017" stroke="#444" stroke-width="1.1"/>
<rect x="1781" y="1010" width="6" height="14" fill="#444"/>
<line x1="1852" y1="1017" x2="1862" y2="1017" stroke="#444" stroke-width="1.1"/>
<line x1="1857" y1="1012" x2="1857" y2="1022" stroke="#444" stroke-width="1.1"/>
</svg>
<!-- 70_taskbar.py -->
<div class="a" style="left:494px;top:1030px;width:61px;height:47px;background:#474B54;"></div>
<div class="a" style="left:437px;top:1077px;width:51px;height:3px;background:#76B9ED;"></div>
<div class="a" style="left:494px;top:1077px;width:61px;height:3px;background:#76B9ED;"></div>
<div class="t" style="left:1311.6px;top:1046.16px;font-size:18px;color:#FFFFFF;font-weight:normal;">Watchlist</div>
<div class="t" style="left:1394.7px;top:1046.16px;font-size:18px;color:#E8595A;font-weight:normal;">-0.34%</div>
<div class="t" style="left:1731.3px;top:1047.80px;font-size:15px;color:#FFFFFF;font-weight:normal;">DEU</div>
<div class="t" style="left:1510.4px;width:600px;text-align:center;top:1036.00px;font-size:15px;color:#FFFFFF;font-weight:normal;">17:53</div>
<div class="t" style="left:1511.0px;width:600px;text-align:center;top:1059.00px;font-size:15px;color:#FFFFFF;font-weight:normal;">17.11.2022</div>
<svg style="left:0;top:0" width="1920" height="1080">
<defs>
 <linearGradient id="edg" x1="0" y1="0" x2="1" y2="1"><stop offset="0" stop-color="#35C1F1"/><stop offset="0.6" stop-color="#0E78D4"/><stop offset="1" stop-color="#1450A8"/></linearGradient>
 <linearGradient id="edg2" x1="0" y1="0" x2="1" y2="0"><stop offset="0" stop-color="#3BC5A8"/><stop offset="1" stop-color="#7FD64C"/></linearGradient>
 <linearGradient id="mailg" x1="0" y1="0" x2="1" y2="1"><stop offset="0" stop-color="#1C8BE0"/><stop offset="1" stop-color="#3FC2F5"/></linearGradient>
 <radialGradient id="ffg" cx="0.5" cy="0.4" r="0.6"><stop offset="0" stop-color="#FFD43B"/><stop offset="0.5" stop-color="#FF7139"/><stop offset="1" stop-color="#E31587"/></radialGradient>
</defs>
<!-- windows -->
<g fill="#fff">
 <path d="M20 1047.5 L29 1046.3 L29 1054.5 L20 1054.5 Z"/>
 <path d="M30.5 1046.1 L40 1045 L40 1054.5 L30.5 1054.5 Z"/>
 <path d="M20 1056 L29 1056 L29 1064.2 L20 1063 Z"/>
 <path d="M30.5 1056 L40 1056 L40 1065.5 L30.5 1064.4 Z"/>
</g>
<!-- search -->
<circle cx="92.5" cy="1052.5" r="6.8" fill="none" stroke="#fff" stroke-width="1.3"/>
<line x1="87.5" y1="1057.5" x2="80.5" y2="1064.5" stroke="#fff" stroke-width="1.4"/>
<!-- task view -->
<g stroke="#fff" stroke-width="1.3" fill="none">
 <rect x="141.5" y="1049.5" width="11" height="11"/>
 <line x1="139.5" y1="1046" x2="154.5" y2="1046"/><line x1="139.5" y1="1064" x2="154.5" y2="1064"/>
 <line x1="158.5" y1="1045" x2="158.5" y2="1065"/>
</g>
<rect x="156.5" y="1052" width="4" height="5" fill="#fff"/>
<!-- store -->
<path d="M199 1048 L228 1048 L228 1067 Q228 1070 225 1070 L202 1070 Q199 1070 199 1067 Z" fill="#F3F3F3"/>
<path d="M206 1048 L206 1043.5 Q206 1041.5 208 1041.5 L219 1041.5 Q221 1041.5 221 1043.5 L221 1048" stroke="#2EA1E8" stroke-width="2" fill="none"/>
<rect x="208.5" y="1052.5" width="4.5" height="4.5" fill="#F25022"/><rect x="214" y="1052.5" width="4.5" height="4.5" fill="#7FBA00"/>
<rect x="208.5" y="1058" width="4.5" height="4.5" fill="#00A4EF"/><rect x="214" y="1058" width="4.5" height="4.5" fill="#FFB900"/>
<!-- people -->
<circle cx="266.5" cy="1048.5" r="3.5" fill="#1F7ACB"/><circle cx="285.5" cy="1048.5" r="3.5" fill="#1F7ACB"/>
<path d="M261 1068.5 L261 1058 Q261 1054 265 1054 L268 1054 L268 1068.5 Z" fill="#1F7ACB"/>
<path d="M284 1054 L287 1054 Q291 1054 291 1058 L291 1068.5 L284 1068.5 Z" fill="#1F7ACB"/>
<circle cx="276" cy="1047" r="4.5" fill="#35A3EA"/>
<path d="M267 1068.5 L267 1058 Q267 1053 272 1053 L280 1053 Q285 1053 285 1058 L285 1068.5 Z" fill="#35A3EA"/>
<!-- edge -->
<defs><linearGradient id="edgeA" x1="0" y1="0.3" x2="1" y2="0.7"><stop offset="0" stop-color="#2A9FE6"/><stop offset="0.5" stop-color="#35B9D6"/><stop offset="1" stop-color="#6BD85C"/></linearGradient></defs>
<circle cx="338" cy="1055" r="15" fill="url(#edgeA)"/>
<path d="M323 1055 A15 15 0 0 0 352.9 1057.6 L341 1058.5 C334 1059 332 1053 337 1050.5 C330 1049.5 324.5 1052 323 1055 Z" fill="#1A78D6"/>
<path d="M328.5 1062.5 C329 1057 333 1053.5 336.5 1054 C335.5 1060 342 1066 352 1063 C347 1070.5 334 1070.5 328.5 1062.5 Z" fill="#114FA6"/>
<circle cx="337.8" cy="1054.8" r="3.2" fill="#1B222C"/>
<path d="M340.5 1058 C345 1060 349 1060 353 1058.2 L353 1061.2 C348 1062.8 343 1062.3 339.8 1060.2 Z" fill="#1B222C"/>
<!-- shield -->
<path d="M399.5 1043.5 C404 1046 407 1046.5 410.5 1046.5 L410.5 1054 C410.5 1060 405 1063.5 399.5 1065.5 C394 1063.5 388.75 1060 388.75 1054 L388.75 1046.5 C392 1046.5 395 1046 399.5 1043.5 Z" fill="#fff"/>
<rect x="398.8" y="1044" width="1.4" height="21" fill="#1B222C"/><rect x="389" y="1053" width="21.5" height="1.4" fill="#1B222C"/>
<!-- mail -->
<path d="M447 1049.5 L462 1041 L477 1049.5 Z" fill="#1565C8"/>
<path d="M447 1049.5 L477 1049.5 L477 1068.7 L447 1068.7 Z" fill="#2AA4EC"/>
<path d="M477 1049.5 L462 1058.5 L477 1068.7 Z" fill="#3FC3F5"/>
<path d="M447 1068.7 L462 1058.5 L477 1068.7 Z" fill="#1E8EDD"/>
<path d="M449.5 1050.3 L474.5 1050.3 L462 1058.2 Z" fill="#F4F4F4"/>
<path d="M449.5 1050.3 L474.5 1050.3 L473.5 1051.3 L450.5 1051.3 Z" fill="#CFCFCF"/>
<!-- outlook -->
<rect x="516" y="1041.5" width="22" height="26" rx="1.5" fill="#0A5EB5"/>
<rect x="524" y="1046" width="14" height="14" fill="#28A8EA"/>
<rect x="516" y="1046" width="8" height="8" fill="#0F78D4"/>
<path d="M516 1056 L527 1062 L538 1056 L538 1068 L516 1068 Z" fill="#2BA5EC"/>
<path d="M516 1068 L530 1059 L538 1064 L538 1068 Z" fill="#1490DF"/>
<rect x="509" y="1047.5" width="15" height="15" rx="1.2" fill="#1066CC"/>
<ellipse cx="516.5" cy="1055" rx="3.7" ry="4.2" fill="none" stroke="#fff" stroke-width="1.6"/>
<!-- explorer -->
<path d="M571 1044 L581 1044 L583 1046 L600 1046 L600 1066 L571 1066 Z" fill="#F4B21B"/>
<rect x="571" y="1048" width="29" height="18" fill="#FFD75E"/>
<path d="M579 1067 L579 1059 L592 1059 L592 1067 L588.5 1067 L588.5 1062.5 L582.5 1062.5 L582.5 1067 Z" fill="#2A8FE0"/>
<!-- firefox -->
<circle cx="647.5" cy="1056" r="13.5" fill="url(#ffg)"/>
<path d="M652 1040 C658 1044 663 1050 661.5 1058 C660 1052 656 1048 652 1046 Z" fill="#FFC83A"/>
<path d="M634.5 1049 C635 1044 638 1042 640 1041.5 C639 1044 640 1046 642 1047 Z" fill="#FF9A3A"/>
<circle cx="649" cy="1054.5" r="6.3" fill="#7B3BD8"/>
<path d="M640 1050 C643 1047 648 1047 652 1049 C648 1049 644 1050 642 1053 Z" fill="#FFB347"/>
<!-- chrome -->
<circle cx="710" cy="1055" r="14.5" fill="#DB4437"/>
<path d="M710 1055 L722.5 1047.8 A14.5 14.5 0 0 1 710 1069.5 Z" fill="#FFCD40"/>
<path d="M710 1055 L710 1069.5 A14.5 14.5 0 0 1 697.5 1047.8 Z" fill="#0F9D58"/>
<circle cx="710" cy="1055" r="6.6" fill="#fff"/>
<circle cx="710" cy="1055" r="5.2" fill="#1A73E8"/>
<!-- IE -->
<text x="759.5" y="1066.5" font-family="Liberation Sans" font-weight="bold" font-size="37" fill="#3DBBF0" textLength="26" lengthAdjust="spacingAndGlyphs">e</text>
<path d="M761 1067 C754 1069 756 1060 770 1050 C782 1042 790 1040 785 1048" stroke="#F2C230" stroke-width="2.2" fill="none"/>
<!-- RDP -->
<rect x="827.5" y="1044" width="21.5" height="15.5" rx="1.2" fill="#1C8AE0"/>
<rect x="818.5" y="1050" width="21.5" height="15.5" rx="1.2" fill="#1559B0"/>
<rect x="827.5" y="1050" width="12.5" height="9.5" fill="#45C0F2"/>
<line x1="830" y1="1065.5" x2="830" y2="1069" stroke="#aaa" stroke-width="1.2"/><line x1="826" y1="1069.5" x2="834" y2="1069.5" stroke="#aaa" stroke-width="1.2"/>
<!-- tray -->
<g stroke="#fff" stroke-width="1.2" fill="none">
 <circle cx="1224.5" cy="1055" r="3"/><path d="M1217 1063.5 C1217 1059 1220 1058.5 1224.5 1058.5 C1229 1058.5 1232 1059 1232 1063.5"/>
 <circle cx="1229" cy="1049" r="3"/><path d="M1227 1056 C1228 1053 1230 1052.5 1233.5 1052.5 C1235 1053 1235.5 1055 1235.5 1057"/>
</g>
<path d="M1272 1050 L1278 1045.5 L1286 1053 L1290 1049 L1297 1054 L1297 1050 L1301 1050 L1301 1063 L1288 1063 L1288 1059 L1292 1059 L1287 1054.5 L1283 1058.5 Z" fill="#D83B01"/>
<path d="M1272 1050 L1278 1045.5 L1282 1049.5 L1277 1054 Z" fill="#A4262C"/>
<path d="M1485 1059 L1493 1051 L1501 1059" stroke="#fff" stroke-width="1.3" fill="none"/>
<g stroke="#fff" stroke-width="1.1" fill="none">
 <rect x="1527.5" y="1045.5" width="6" height="4"/>
 <path d="M1526.5 1050 L1534.5 1050 L1534.5 1064.5 L1526.5 1064.5 Z"/>
 <path d="M1536 1063 L1539 1065 L1543 1060" stroke="#ccc"/>
 <rect x="1566.5" y="1050" width="15" height="9" rx="1"/>
 <line x1="1563" y1="1053" x2="1566" y2="1053"/><line x1="1563" y1="1051" x2="1563" y2="1055"/>
 <path d="M1603 1051.5 L1607 1051.5 L1611 1047.5 L1611 1061.5 L1607 1057.5 L1603 1057.5 Z"/>
 <path d="M1614 1052 C1615.5 1053.5 1615.5 1055.5 1614 1057"/>
 <path d="M1617 1049.5 C1620 1052.5 1620 1056.5 1617 1059.5"/>
 <path d="M1620.5 1047 C1625 1051 1625 1058 1620.5 1062" stroke="#888"/>
 <rect x="1683.5" y="1047.5" width="29" height="16" rx="1"/>
</g>
<rect x="1568" y="1052" width="12" height="5" fill="#fff"/>
<rect x="1582" y="1052.5" width="1.5" height="4" fill="#fff"/>
<g stroke="#fff" stroke-width="1.4" fill="none">
 <path d="M1647 1062 C1647 1055 1652 1049 1660 1048"/>
 <path d="M1651 1062 C1651 1057 1654 1053 1659 1052.5"/>
 <path d="M1654.5 1062 C1654.5 1059 1656 1057 1658.5 1056.5"/>
</g>
<circle cx="1659.5" cy="1061" r="1.8" fill="#fff"/>
<g fill="#fff">
 <rect x="1687" y="1051" width="1.5" height="1.3"/><rect x="1690.5" y="1051" width="1.5" height="1.3"/><rect x="1694" y="1051" width="1.5" height="1.3"/><rect x="1697.5" y="1051" width="1.5" height="1.3"/><rect x="1701" y="1051" width="1.5" height="1.3"/><rect x="1704.5" y="1051" width="1.5" height="1.3"/><rect x="1708" y="1051" width="1.5" height="1.3"/>
 <rect x="1687" y="1054.5" width="1.5" height="1.3"/><rect x="1690.5" y="1054.5" width="1.5" height="1.3"/><rect x="1694" y="1054.5" width="1.5" height="1.3"/><rect x="1697.5" y="1054.5" width="1.5" height="1.3"/><rect x="1701" y="1054.5" width="1.5" height="1.3"/><rect x="1704.5" y="1054.5" width="1.5" height="1.3"/><rect x="1708" y="1054.5" width="1.5" height="1.3"/>
 <rect x="1690" y="1058.5" width="16" height="1.3"/>
</g>
<path d="M1868.5 1045.5 L1889.5 1045.5 L1889.5 1061 L1881 1061 L1878.5 1064 L1876 1061 L1868.5 1061 Z" fill="none" stroke="#fff" stroke-width="1.2"/>
<line x1="1914.5" y1="1030" x2="1914.5" y2="1080" stroke="#555" stroke-width="1"/>
</svg>
</body></html>
